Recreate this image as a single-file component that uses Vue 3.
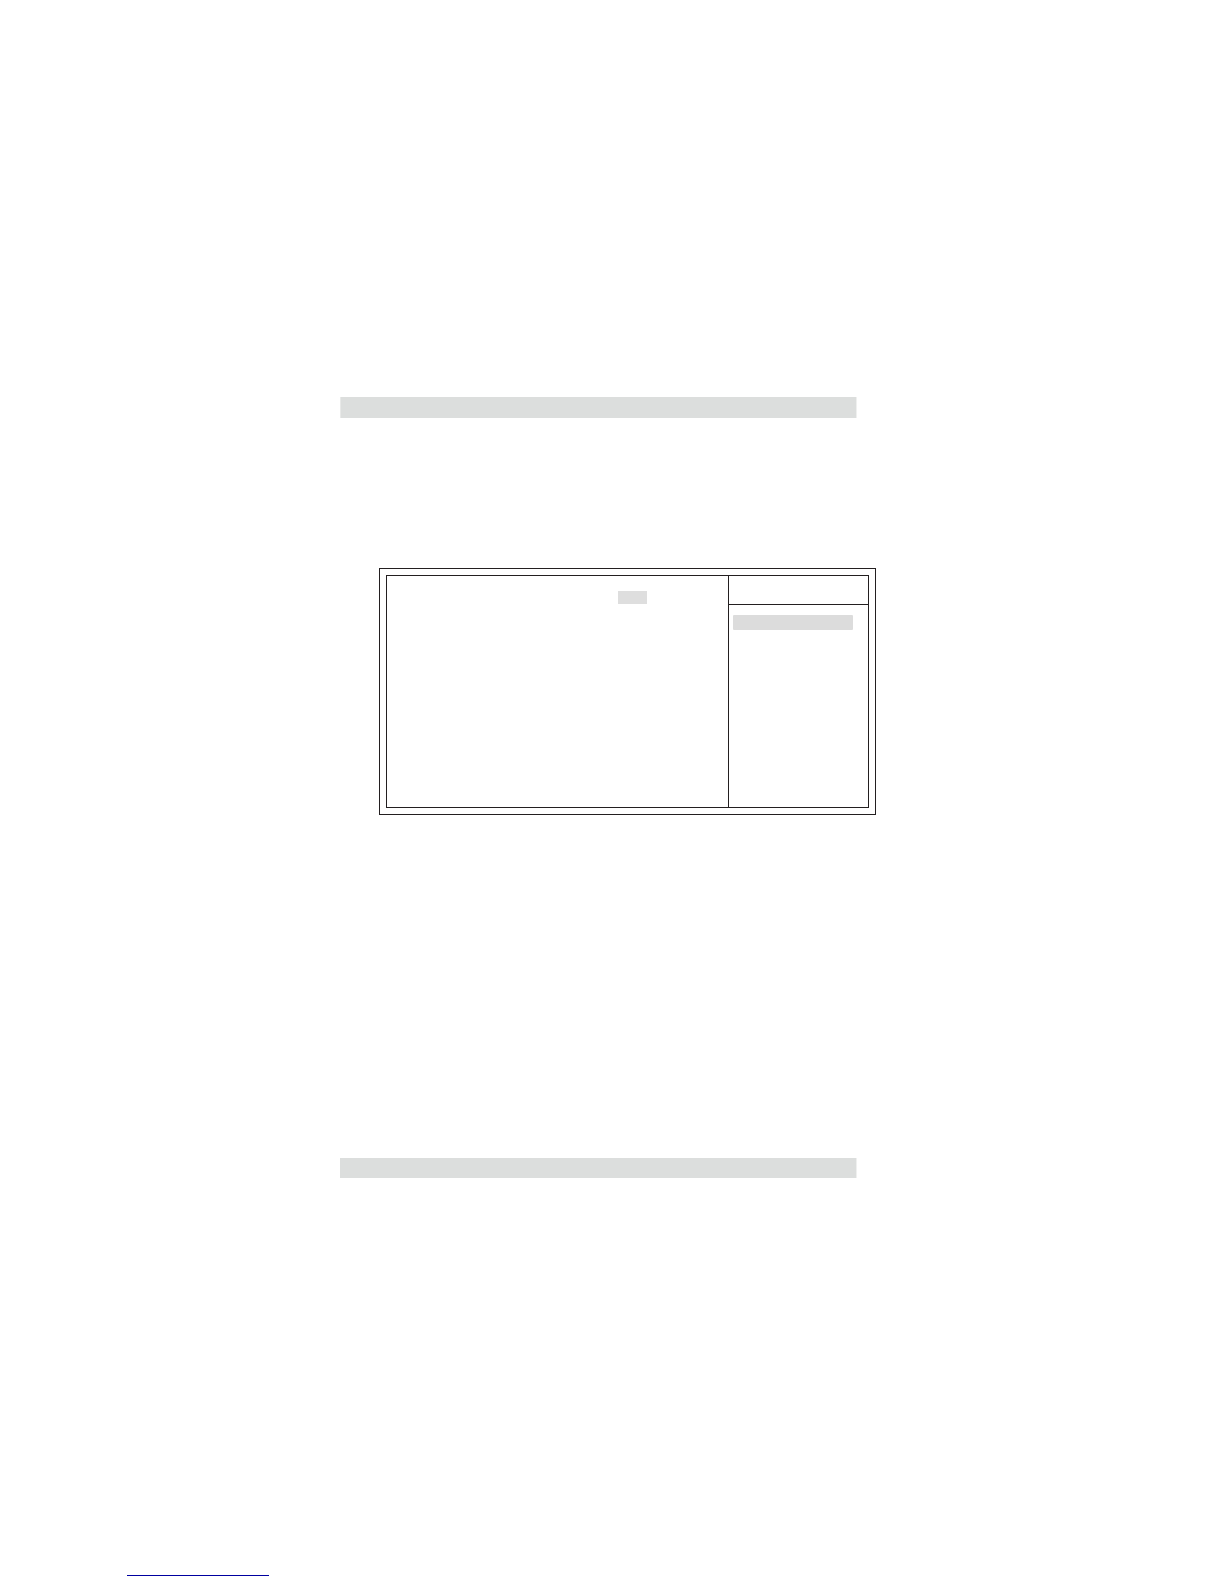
<template>
  <div class="page">
    <header class="bar bar-top"></header>

    <main class="frame">
      <div class="frame-inner">
        <section class="settings">
          <div class="value"></div>
        </section>
        <aside class="help">
          <div class="help-title"></div>
          <div class="help-body">
            <div class="help-item"></div>
          </div>
        </aside>
      </div>
    </main>

    <footer class="bar bar-bottom"></footer>

    <a class="link" href="#"></a>
  </div>
</template>

<script setup>
</script>

<style>
body {
  margin: 0;
  background: #fff;
}
</style>

<style scoped>
.page {
  box-sizing: border-box;
  display: flex;
  flex-direction: column;
  min-height: 100vh;
  padding-top: 397px;
  font-family: "Liberation Sans", Arial, sans-serif;
}

.bar {
  box-sizing: border-box;
  height: 20px;
  margin: 0 367px 0 340px;
  background: #dcdedd;
  border-right: 1px solid #eff0ef;
}

.bar-top {
  height: 21px;
  border-left: 1px solid #e8e9e8;
}

.frame {
  margin: 150px 348px 343px 379px;
  padding: 6px;
  border: 1px solid #231f20;
}

.frame-inner {
  display: flex;
  min-height: 231px;
  border: 1px solid #231f20;
}

.settings {
  display: flex;
  flex: 1;
  align-items: flex-start;
  justify-content: flex-end;
  padding: 15px 81px 0 0;
}

.value {
  width: 29px;
  height: 13px;
  background: #dedede;
}

.help {
  flex: 0 0 139px;
  border-left: 1px solid #231f20;
}

.help-title {
  height: 28px;
  border-bottom: 1px solid #231f20;
}

.help-body {
  padding: 10px 15px 10px 4px;
}

.help-item {
  height: 15px;
  background: #dcdcdc;
  border-radius: 1px;
}

.link {
  width: 142px;
  margin: 397px 0 0 127px;
  border-top: 1px solid #0000a0;
}
</style>
